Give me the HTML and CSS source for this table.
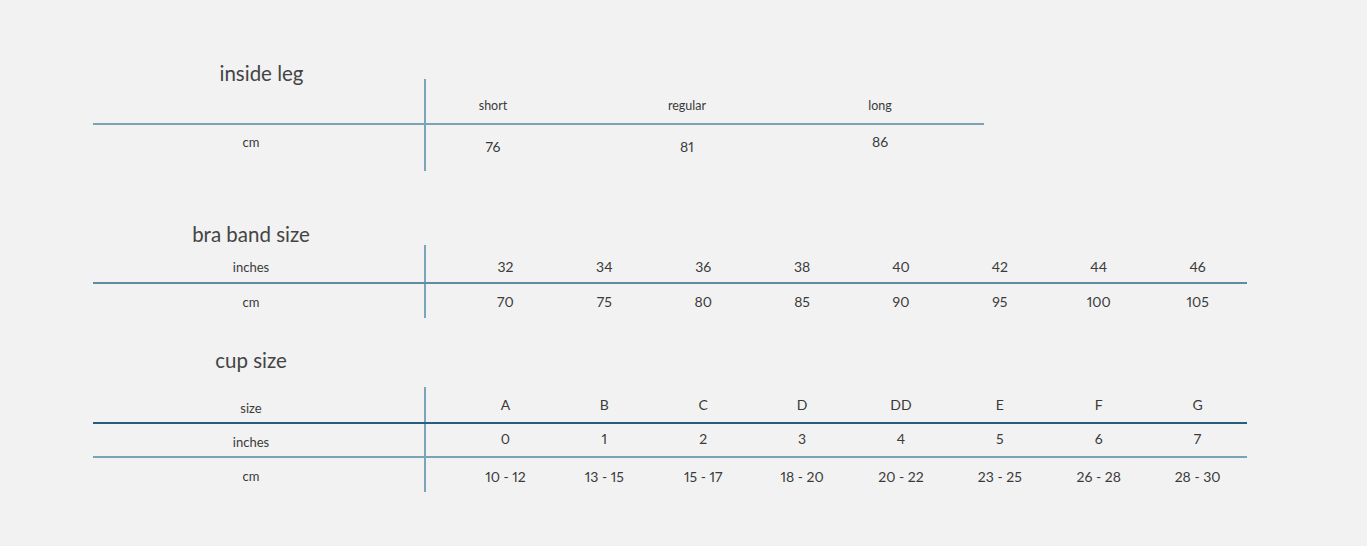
FILE: index.html
```html
<!DOCTYPE html>
<html lang="en">
<head>
<meta charset="utf-8">
<title>Size guide</title>
<link rel="stylesheet" href="styles.css">
</head>
<body>
<main class="page">
  <section class="sec sec-leg">
    <h2 class="title title-leg">inside leg</h2>
    <div class="tbl tbl-leg">
      <div class="row row-h44">
        <div class="label"></div>
        <div class="vals vals-leg">
          <span class="cell txt pt8">short</span>
          <span class="cell txt pt8">regular</span>
          <span class="cell txt pt8">long</span>
        </div>
      </div>
      <div class="row row-h46 line-light">
        <div class="label pb13">cm</div>
        <div class="vals vals-leg">
          <span class="cell num pb4">76</span>
          <span class="cell num pb4">81</span>
          <span class="cell num pb14">86</span>
        </div>
      </div>
    </div>
  </section>

  <section class="sec sec-bra">
    <h2 class="title">bra band size</h2>
    <div class="tbl tbl-bra">
      <div class="row row-h37">
        <div class="label pt6">inches</div>
        <div class="vals vals-8">
          <span class="cell num pt5">32</span>
          <span class="cell num pt5">34</span>
          <span class="cell num pt5">36</span>
          <span class="cell num pt5">38</span>
          <span class="cell num pt5">40</span>
          <span class="cell num pt5">42</span>
          <span class="cell num pt5">44</span>
          <span class="cell num pt5">46</span>
        </div>
      </div>
      <div class="row row-h34 line-mid">
        <div class="label pt1">cm</div>
        <div class="vals vals-8">
          <span class="cell num">70</span>
          <span class="cell num">75</span>
          <span class="cell num">80</span>
          <span class="cell num">85</span>
          <span class="cell num">90</span>
          <span class="cell num">95</span>
          <span class="cell num">100</span>
          <span class="cell num">105</span>
        </div>
      </div>
    </div>
  </section>

  <section class="sec sec-cup">
    <h2 class="title">cup size</h2>
    <div class="tbl tbl-cup">
      <div class="row row-h35">
        <div class="label pt6">size</div>
        <div class="vals vals-8">
          <span class="cell num">A</span>
          <span class="cell num">B</span>
          <span class="cell num">C</span>
          <span class="cell num">D</span>
          <span class="cell num">DD</span>
          <span class="cell num">E</span>
          <span class="cell num">F</span>
          <span class="cell num">G</span>
        </div>
      </div>
      <div class="row row-h32 line-dark">
        <div class="label pt3">inches</div>
        <div class="vals vals-8">
          <span class="cell num pb3">0</span>
          <span class="cell num pb3">1</span>
          <span class="cell num pb3">2</span>
          <span class="cell num pb3">3</span>
          <span class="cell num pb3">4</span>
          <span class="cell num pb3">5</span>
          <span class="cell num pb3">6</span>
          <span class="cell num pb3">7</span>
        </div>
      </div>
      <div class="row row-h34 line-light">
        <div class="label pt2">cm</div>
        <div class="vals vals-8">
          <span class="cell num pt2">10 - 12</span>
          <span class="cell num pt2">13 - 15</span>
          <span class="cell num pt2">15 - 17</span>
          <span class="cell num pt2">18 - 20</span>
          <span class="cell num pt2">20 - 22</span>
          <span class="cell num pt2">23 - 25</span>
          <span class="cell num pt2">26 - 28</span>
          <span class="cell num pt2">28 - 30</span>
        </div>
      </div>
    </div>
  </section>
</main>
</body>
</html>
```

FILE: styles.css
```css
html, body {
  margin: 0;
  padding: 0;
  background: #f2f2f2;
}

body {
  font-family: Lato, "Noto Sans", "Liberation Sans", sans-serif;
  color: #3a3a3a;
  height: 546px;
  overflow: hidden;
}

.page {
  padding: 61px 0 0 93px;
}

.sec-bra { margin-top: 51px; }
.sec-cup { margin-top: 30px; }

.title {
  margin: 0;
  width: 316px;
  box-sizing: border-box;
  text-align: center;
  font-size: 20.5px;
  line-height: 24px;
  font-weight: 400;
  color: #444444;
}

.title-leg { padding-left: 21px; }

.tbl-leg { width: 891px; margin-top: -6px; }
.tbl-bra { width: 1154px; margin-top: -1px; }
.tbl-cup { width: 1154px; margin-top: 15px; }

.row {
  display: grid;
  grid-template-columns: 331px 1fr;
}

.row-h44 { height: 44px; }
.row-h46 { height: 46px; }
.row-h37 { height: 37px; }
.row-h35 { height: 35px; }
.row-h34 { height: 34px; }
.row-h32 { height: 32px; }

.line-light { border-top: 2px solid #7ca2b5; }
.line-mid { border-top: 2px solid #5f8ca3; }
.line-dark { border-top: 2px solid #245f7e; }

.label {
  padding-right: 15px;
  display: flex;
  align-items: center;
  justify-content: center;
  font-size: 13px;
  color: #3a3a3a;
}

.vals {
  border-left: 2px solid #7ca4b8;
  display: grid;
  align-items: stretch;
}

.vals-leg {
  grid-template-columns: 134px 254px 132px 1fr;
}

.vals-8 {
  padding-left: 30px;
  grid-template-columns: repeat(8, 1fr);
}

.cell {
  display: flex;
  align-items: center;
  justify-content: center;
  white-space: nowrap;
}

.txt { font-size: 12.5px; }
.num { font-size: 14px; font-variant-numeric: proportional-nums; }

.pt1 { padding-top: 1px; }
.pt2 { padding-top: 2px; }
.pt3 { padding-top: 3px; }
.pt5 { padding-top: 5px; }
.pt6 { padding-top: 6px; }
.pt8 { padding-top: 8px; }
.pb3 { padding-bottom: 3px; }
.pb4 { padding-bottom: 4px; }
.pb13 { padding-bottom: 13px; }
.pb14 { padding-bottom: 14px; }
```
